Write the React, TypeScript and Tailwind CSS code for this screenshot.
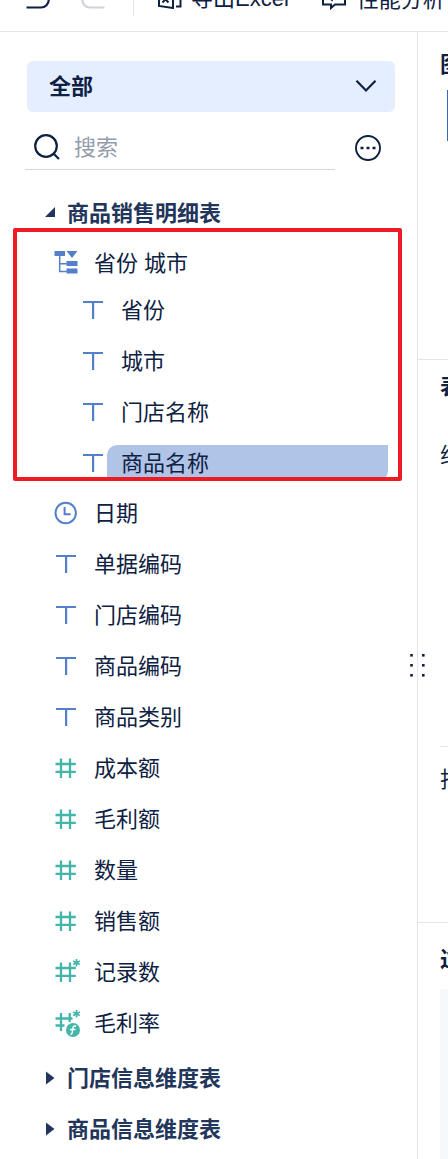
import React from "react";

type IconKind = "text" | "date" | "number" | "count" | "formula";

const BLUE = "#537fcb";
const TEAL = "#43b5a9";

function TextIcon() {
  return (
    <svg width="22" height="26" viewBox="0 0 22 26" fill={BLUE}>
      <rect x="1" y="4" width="20" height="2" />
      <rect x="10" y="4" width="2.2" height="18" />
    </svg>
  );
}

function DateIcon() {
  return (
    <svg width="24" height="26" viewBox="0 0 24 26" fill="none" stroke={BLUE} strokeWidth="2">
      <circle cx="11.7" cy="13" r="10.2" />
      <path d="M10.6 7v7.300h6" />
    </svg>
  );
}

function HierarchyIcon() {
  return (
    <svg width="24" height="26" viewBox="0 0 24 26" fill={BLUE}>
      <rect x="0.5" y="2" width="10.5" height="5" />
      <path d="M12.500 2h11l-5.500 7z" />
      <rect x="12.5" y="12" width="11" height="5" />
      <rect x="12.5" y="19.500" width="11" height="5" />
      <path d="M5.700 7v15.500h7M5.700 14.700h7" fill="none" stroke={BLUE} strokeWidth="1.500" />
    </svg>
  );
}

function NumberIcon({ kind }: { kind: IconKind }) {
  return (
    <svg width="27" height="28" viewBox="0 0 27 28" fill="none" stroke={TEAL} strokeWidth="2.3">
      {kind === "formula" ? (
        <>
          <path d="M0.500 9.500h17M0.500 16.500h9M6 4v18M14.700 4v9" />
          <circle cx="18" cy="21" r="7" fill={TEAL} stroke="none" />
          <path d="M21.200 17.200c-2-.8-3 0-3.200 1.500l-.8 5c-.2 1.300-1 1.700-1.700 1.500M14.900 20.500h5.600" stroke="white" strokeWidth="1.500" />
        </>
      ) : (
        <path d="M0.500 10h20.300M0.500 17.800h20.300M6 4.500v19.500M15 4.500v19.500" />
      )}
      {kind !== "number" && <path d="M21.500 1v7.400M18.200 2.900l6.600 3.600M24.800 2.900l-6.600 3.600" strokeWidth="1.700" />}
    </svg>
  );
}

function FieldIcon({ kind }: { kind: IconKind }) {
  if (kind === "text") return <TextIcon />;
  if (kind === "date") return <DateIcon />;
  return <NumberIcon kind={kind} />;
}

const levels = ["省份", "城市", "门店名称", "商品名称"];

const fields: { name: string; kind: IconKind }[] = [
  { name: "日期", kind: "date" },
  { name: "单据编码", kind: "text" },
  { name: "门店编码", kind: "text" },
  { name: "商品编码", kind: "text" },
  { name: "商品类别", kind: "text" },
  { name: "成本额", kind: "number" },
  { name: "毛利额", kind: "number" },
  { name: "数量", kind: "number" },
  { name: "销售额", kind: "number" },
  { name: "记录数", kind: "count" },
  { name: "毛利率", kind: "formula" },
];

function Toolbar() {
  return (
    <header className="h-8 shrink-0 overflow-hidden border-b border-[#e3e4ec]">
      <div className="-mt-[35px] flex h-[68px] w-[520px] items-center">
        <svg className="mb-[3px] ml-6 shrink-0" width="28" height="24" viewBox="0 0 28 24" fill="none" stroke="#0e2142" strokeWidth="2.200">
          <path d="M8 1L2 6l6 5M2 6h15a6.500 6.500 0 0 1 0 15.500H2.500" />
        </svg>
        <svg className="mb-[3px] ml-7 shrink-0" width="28" height="24" viewBox="0 0 28 24" fill="none" stroke="#cfd2da" strokeWidth="2.200">
          <path d="M19 1l6 5-6 5M25 6H10a6.500 6.500 0 0 0 0 15.500h14.500" />
        </svg>
        <div className="ml-[25px] h-[34px] w-px shrink-0 bg-[#e3e4ec]" />
        <svg className="mb-[6px] ml-[23px] shrink-0" width="26" height="26" viewBox="0 0 26 26" fill="none" stroke="#0e2142" strokeWidth="2">
          <path d="M2 3l14-2v24L2 23zM16 3h7.500v20.500H19M5.500 13l6 6.500M11.500 13l-6 6.500" />
        </svg>
        <span className="ml-2 shrink-0 text-[22px] leading-8">导出Excel</span>
        <svg className="mb-[6px] ml-[32px] shrink-0" width="26" height="28" viewBox="0 0 26 28" fill="none" stroke="#0e2142" strokeWidth="2">
          <path d="M2 2h22v20.500H14l-4 3.500v-3.500H2zM7 14l4 4 6-8" />
        </svg>
        <span className="ml-[10px] shrink-0 pt-px text-[22px] leading-8">性能分析</span>
      </div>
    </header>
  );
}

function TableHeading({ name, open }: { name: string; open?: boolean }) {
  return (
    <div className="flex h-[51px] items-center pl-[44px] font-bold text-[#22355a]">
      <svg className="mb-[2px] w-[12px] shrink-0" height="14" viewBox="0 0 12 14" fill="#22355a">
        {open ? <path d="M11 1v10H1z" /> : <path d="M2 0.500L10.500 7 2 13.500z" />}
      </svg>
      <span className="ml-[11px]">{name}</span>
    </div>
  );
}

function Sidebar() {
  return (
    <aside className="relative w-[418px] shrink-0 border-r border-[#e3e4ec] pt-[29px]">
      <button className="ml-[27px] flex h-[51px] w-[368px] items-center justify-between rounded-md bg-[#e5eeff] pl-[22px] pr-[18px] font-bold">
        <span>全部</span>
        <svg className="mb-[2px]" width="22" height="14" viewBox="0 0 22 14" fill="none" stroke="#0e2142" strokeWidth="2.200">
          <path d="M1.500 1.800L11 11.500l9.500-9.700" />
        </svg>
      </button>
      <div className="flex h-[58px] pl-[25px]">
        <div className="flex w-[310px] items-center border-b border-[#d6d9df] pt-[13px] text-[#949cab]">
          <svg className="ml-2 shrink-0" width="28" height="28" viewBox="0 0 28 28" fill="none" stroke="#0e2142" strokeWidth="2.200">
            <circle cx="13" cy="13" r="10.800" />
            <path d="M20.500 20.500l5.500 5.500" />
          </svg>
          <span className="ml-[13px] pt-[2px]">搜索</span>
        </div>
        <svg className="ml-[19px] mt-[22px]" width="28" height="28" viewBox="0 0 28 28" fill="none" stroke="#0e2142" strokeWidth="1.900">
          <circle cx="14" cy="14" r="12" />
          <path d="M6.500 14h3M12.500 14h3M18.500 14h3" strokeWidth="2.500" />
        </svg>
      </div>
      <div className="mt-[18px]">
        <TableHeading name="商品销售明细表" open />
      </div>
      <div className="flex h-[45px] items-center pl-[54px]">
        <HierarchyIcon />
        <span className="ml-4 pt-[4px]">省份 城市</span>
      </div>
      {levels.map((name, i) => (
        <div key={name} className="flex h-[51px] items-center pl-[82px]">
          <TextIcon />
          <div
            className={
              i === 3
                ? "ml-[3px] h-[36px] w-[281px] rounded-tl-[10px] rounded-br-[10px] bg-[#b0c4e7] pl-[14px] leading-[38px]"
                : "ml-[3px] pl-[14px] pt-[2px]"
            }
          >
            {name}
          </div>
        </div>
      ))}
      {fields.map((f) => (
        <div key={f.name} className="flex h-[51px] items-center pl-[54px]">
          <div className={f.kind === "text" || f.kind === "number" || f.kind === "count" || f.kind === "formula" ? "w-10 pb-[2px] pl-px" : "w-10 pb-[2px]"}>
            <FieldIcon kind={f.kind} />
          </div>
          <span>{f.name}</span>
        </div>
      ))}
      <div className="mt-1">
        <TableHeading name="门店信息维度表" />
        <TableHeading name="商品信息维度表" />
      </div>
      <div className="pointer-events-none absolute left-[13px] top-[196px] h-[253px] w-[389px] rounded-[2px] border-4 border-[#ed1c24]" />
      <svg className="absolute left-[408px] top-[620px]" width="20" height="26" viewBox="0 0 20 26" fill="#0e2142">
        {[2, 12, 22].map((y) => (
          <g key={y}>
            <rect x="2.200" y={y} width="2.600" height="2.600" />
            <rect x="14" y={y} width="2.600" height="2.600" />
          </g>
        ))}
      </svg>
    </aside>
  );
}

function Properties() {
  return (
    <section className="flex min-w-0 flex-1 flex-col overflow-hidden whitespace-nowrap">
      <div className="h-[328px] shrink-0 border-b border-[#e3e4ec] pl-[22px] pt-4">
        <h2 className="font-bold leading-[34px]">图表类型</h2>
        <div className="ml-[7px] mt-2 h-[51px] w-[51px] border border-[#3c65b5]" />
      </div>
      <div className="flex h-[563px] shrink-0 flex-col border-b border-[#e3e4ec] pl-[22px]">
        <h2 className="mt-[10px] font-bold leading-[34px]">表格属性</h2>
        <div className="mt-[35px] leading-[34px]">维度</div>
        <div className="mt-[273px] w-[200px] border-t border-[#e3e4ec] pt-[16px] leading-[34px]">指标</div>
      </div>
      <div className="flex flex-1 flex-col pl-[22px]">
        <h2 className="mt-5 font-bold leading-[34px]">过滤器</h2>
        <div className="mt-3 flex-1 bg-[#f7f8fc]" />
      </div>
    </section>
  );
}

export default function App() {
  return (
    <div className="flex h-[1159px] w-[448px] flex-col overflow-hidden bg-white font-['Liberation_Sans','Noto_Sans_CJK_SC',sans-serif] text-[22px] leading-8 text-[#0e2142]">
      <Toolbar />
      <main className="flex min-h-0 flex-1">
        <Sidebar />
        <Properties />
      </main>
    </div>
  );
}
